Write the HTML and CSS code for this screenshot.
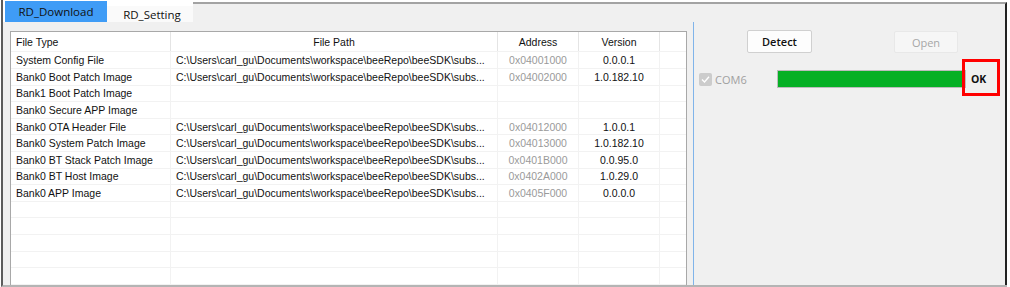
FILE: index.html
```html
<!DOCTYPE html>
<html lang="en">
  <head>
    <meta charset="UTF-8" />
    <title>RD_Download</title>
    <link rel="stylesheet" href="styles.css">
  </head>
  <body>
    <div class="window">
      <div class="tabbar">
        <div class="tab active">RD_Download</div>
        <div class="tab">RD_Setting</div>
        <div class="tab-line"></div>
      </div>

      <div class="pane">
        <div class="table-area">
          <div class="table">
            <div class="row head">
              <div class="cell">File Type</div>
              <div class="cell center">File Path</div>
              <div class="cell center">Address</div>
              <div class="cell center">Version</div>
              <div class="cell"></div>
            </div>
            <div class="row">
              <div class="cell">System Config File</div>
              <div class="cell path">C:\Users\carl_gu\Documents\workspace\beeRepo\beeSDK\subs...</div>
              <div class="cell center addr">0x04001000</div>
              <div class="cell center">0.0.0.1</div>
              <div class="cell"></div>
            </div>
            <div class="row">
              <div class="cell">Bank0 Boot Patch Image</div>
              <div class="cell path">C:\Users\carl_gu\Documents\workspace\beeRepo\beeSDK\subs...</div>
              <div class="cell center addr">0x04002000</div>
              <div class="cell center">1.0.182.10</div>
              <div class="cell"></div>
            </div>
            <div class="row">
              <div class="cell">Bank1 Boot Patch Image</div>
              <div class="cell path"></div>
              <div class="cell center addr"></div>
              <div class="cell center"></div>
              <div class="cell"></div>
            </div>
            <div class="row">
              <div class="cell">Bank0 Secure APP Image</div>
              <div class="cell path"></div>
              <div class="cell center addr"></div>
              <div class="cell center"></div>
              <div class="cell"></div>
            </div>
            <div class="row">
              <div class="cell">Bank0 OTA Header File</div>
              <div class="cell path">C:\Users\carl_gu\Documents\workspace\beeRepo\beeSDK\subs...</div>
              <div class="cell center addr">0x04012000</div>
              <div class="cell center">1.0.0.1</div>
              <div class="cell"></div>
            </div>
            <div class="row">
              <div class="cell">Bank0 System Patch Image</div>
              <div class="cell path">C:\Users\carl_gu\Documents\workspace\beeRepo\beeSDK\subs...</div>
              <div class="cell center addr">0x04013000</div>
              <div class="cell center">1.0.182.10</div>
              <div class="cell"></div>
            </div>
            <div class="row">
              <div class="cell">Bank0 BT Stack Patch Image</div>
              <div class="cell path">C:\Users\carl_gu\Documents\workspace\beeRepo\beeSDK\subs...</div>
              <div class="cell center addr">0x0401B000</div>
              <div class="cell center">0.0.95.0</div>
              <div class="cell"></div>
            </div>
            <div class="row">
              <div class="cell">Bank0 BT Host Image</div>
              <div class="cell path">C:\Users\carl_gu\Documents\workspace\beeRepo\beeSDK\subs...</div>
              <div class="cell center addr">0x0402A000</div>
              <div class="cell center">1.0.29.0</div>
              <div class="cell"></div>
            </div>
            <div class="row">
              <div class="cell">Bank0 APP Image</div>
              <div class="cell path">C:\Users\carl_gu\Documents\workspace\beeRepo\beeSDK\subs...</div>
              <div class="cell center addr">0x0405F000</div>
              <div class="cell center">0.0.0.0</div>
              <div class="cell"></div>
            </div>
            <div class="row"><div class="cell"></div><div class="cell"></div><div class="cell"></div><div class="cell"></div><div class="cell"></div></div>
            <div class="row"><div class="cell"></div><div class="cell"></div><div class="cell"></div><div class="cell"></div><div class="cell"></div></div>
            <div class="row"><div class="cell"></div><div class="cell"></div><div class="cell"></div><div class="cell"></div><div class="cell"></div></div>
            <div class="row"><div class="cell"></div><div class="cell"></div><div class="cell"></div><div class="cell"></div><div class="cell"></div></div>
            <div class="row"><div class="cell"></div><div class="cell"></div><div class="cell"></div><div class="cell"></div><div class="cell"></div></div>
          </div>
        </div>

        <div class="splitter"></div>

        <div class="side">
          <div class="buttons">
            <button class="btn detect">Detect</button>
            <button class="btn open" disabled>Open</button>
          </div>
          <div class="port">
            <div class="port-label">
              <span class="check">
                <svg width="9" height="9" viewBox="0 0 9 9">
                  <path d="M1 4.6 L3.5 7 L8 1.8" fill="none" stroke="#fff" stroke-width="1.4" />
                </svg>
              </span>
              <span class="port-name">COM6</span>
            </div>
            <div class="progress"><div class="progress-fill" style="width: 100%"></div></div>
            <div class="result">OK</div>
          </div>
        </div>
      </div>
    </div>
  </body>
</html>
```

FILE: styles.css
```css
body {
  margin: 0;
  background: #fff;
  font-family: "Liberation Sans", Arial, sans-serif;
  color: #000;
  overflow: hidden;
}
.window {
  margin-left: 1px;
  width: 1006px;
  height: 287px;
  box-sizing: border-box;
  border-left: 2px solid #5c5c5c;
  border-bottom: 2px solid #b4b4b4;
  background: #f0f0f0;
}
.tabbar {
  display: flex;
  height: 22px;
  background: #fff;
}
.tab {
  font-family: "Open Sans", sans-serif;
  font-size: 11.5px;
  color: #111;
  display: flex;
  align-items: center;
  justify-content: center;
  box-sizing: border-box;
  width: 86px;
  height: 16px;
  margin-top: 6px;
  background: #fafafa;
  padding-left: 4px;
}
.tab.active {
  width: 102px;
  height: 21px;
  margin-top: 1px;
  margin-left: 2px;
  background: #3f9cf6;
  padding-left: 0;
  padding-bottom: 1px;
}
.tab-line {
  flex: 1;
  margin-top: 2px;
  border-top: 2px solid #a3a3a3;
  border-right: 2px solid #222;
  background: #f0f0f0;
}
.pane {
  display: flex;
  height: 263px;
  border-right: 2px solid #222;
}
.table-area {
  padding: 9px 0 0 7px;
}
.table {
  width: 677px;
  height: 254px;
  box-sizing: border-box;
  border: 1px solid #a8a8a8;
  border-bottom: none;
  background: #fff;
  overflow: hidden;
  font-size: 10.5px;
  color: #111;
}
.row {
  display: grid;
  grid-template-columns: 160px 327px 81px 81px 1fr;
  height: 16.6px;
  box-sizing: border-box;
  border-bottom: 1px solid #f2f2f2;
}
.row.head {
  height: 20.4px;
}
.cell {
  display: flex;
  align-items: center;
  padding-left: 5px;
  white-space: nowrap;
  overflow: hidden;
  border-right: 1px solid #f2f2f2;
}
.row.head .cell {
  border-right-color: #e4e4e4;
}
.cell:last-child {
  border-right: none;
}
.cell.center {
  justify-content: center;
  padding-left: 0;
}
.cell.path {
  padding-left: 5px;
}
.cell.addr {
  color: #9a9a9a;
}
.splitter {
  width: 1px;
  margin-left: 6px;
  background: #80b4ea;
}
.side {
  flex: 1;
  font-family: "Open Sans", sans-serif;
  font-size: 11px;
}
.buttons {
  display: flex;
  align-items: flex-start;
  padding-top: 8px;
}
.btn {
  font-family: "Open Sans", sans-serif;
  font-size: 11px;
  box-sizing: border-box;
  border-radius: 2px;
  padding: 0;
}
.btn.detect {
  margin-left: 53px;
  width: 65px;
  height: 23px;
  background: #fdfdfd;
  border: 1px solid #d0d0d0;
  color: #111;
  font-weight: 600;
}
.btn.open {
  margin-left: 82px;
  margin-top: 1px;
  width: 64px;
  height: 22px;
  background: #f6f6f6;
  border: 1px solid #e8e8e8;
  color: #a6a6a6;
}
.port {
  display: flex;
  align-items: stretch;
  height: 18px;
  margin-top: 17px;
  padding-left: 5px;
}
.port-label {
  width: 78px;
  display: flex;
  align-items: center;
}
.check {
  width: 13px;
  height: 13px;
  border-radius: 2px;
  background: #cccccc;
  display: flex;
  align-items: center;
  justify-content: center;
}
.port-name {
  margin-left: 3px;
  color: #a0a0a0;
}
.progress {
  width: 189px;
  box-sizing: border-box;
  border: 1px solid #bcbcbc;
  background: #e6e6e6;
}
.progress-fill {
  height: 100%;
  background: #06b025;
}
.result {
  position: relative;
  margin-left: 5px;
  display: flex;
  align-items: center;
  font-size: 10.5px;
  font-weight: 700;
  color: #111;
}
.result::after {
  content: "";
  position: absolute;
  left: -9px;
  top: -11px;
  width: 38px;
  height: 37px;
  box-sizing: border-box;
  border: 3px solid #ff0000;
}
```
